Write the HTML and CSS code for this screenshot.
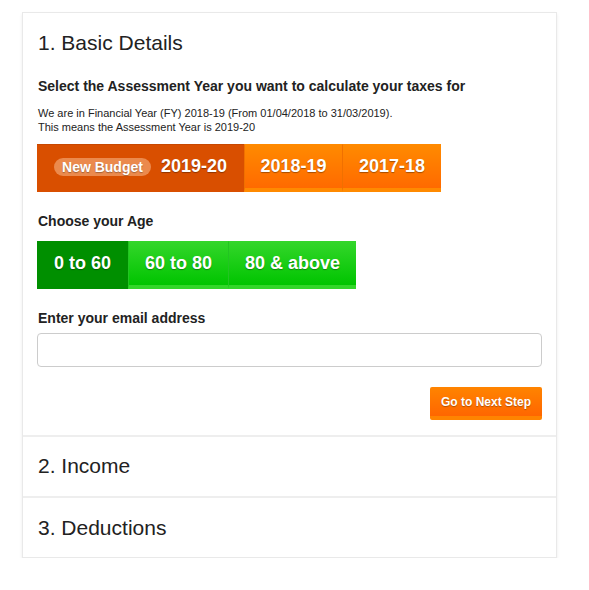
FILE: index.html
```html
<!DOCTYPE html>
<html>
<head>
<meta charset="utf-8">
<link rel="stylesheet" href="styles.css">
</head>
<body>
<div class="card">
  <section class="step step-open">
    <h2 class="step-title">1. Basic Details</h2>
    <h3 class="label year-label">Select the Assessment Year you want to calculate your taxes for</h3>
    <p class="note">We are in Financial Year (FY) 2018-19 (From 01/04/2018 to 31/03/2019).<br>This means the Assessment Year is 2019-20</p>
    <div class="btn-group">
      <button class="opt orange active y1"><span class="pill">New Budget</span>2019-20</button>
      <button class="opt orange y2">2018-19</button>
      <button class="opt orange y3">2017-18</button>
    </div>
    <h3 class="label age-label">Choose your Age</h3>
    <div class="btn-group age-group">
      <button class="opt green active g1">0 to 60</button>
      <button class="opt green g2">60 to 80</button>
      <button class="opt green g3">80 &amp; above</button>
    </div>
    <h3 class="label email-label">Enter your email address</h3>
    <input class="email" type="text">
    <div class="actions">
      <button class="next">Go to Next Step</button>
    </div>
  </section>
  <section class="step"><h2 class="step-title">2. Income</h2></section>
  <section class="step last"><h2 class="step-title">3. Deductions</h2></section>
</div>
</body>
</html>
```

FILE: styles.css
```css
* { box-sizing: border-box; }
body {
  margin: 0;
  background: #fff;
  font-family: "Liberation Sans", Arial, sans-serif;
  color: #222;
}
.card {
  margin: 12px 0 0 22px;
  width: 535px;
  border: 1px solid #e9e9e9;
  box-shadow: 0 2px 3px rgba(0,0,0,0.08);
  background: #fff;
}
.step {
  border-bottom: 2px solid #eeeeee;
  padding: 0 15px 1px;
  height: 61px;
  display: flex;
  align-items: center;
}
.step.last { border-bottom: none; height: 59px; padding-bottom: 0; }
.step-open {
  display: block;
  height: auto;
  padding: 19px 14px 15px 14px;
}
.step-open .step-title { padding-left: 1px; }
.step-title {
  margin: 0;
  font-size: 21px;
  font-weight: normal;
  line-height: 22px;
  color: #222;
}
.label {
  margin: 23px 0 0;
  padding-left: 1px;
  font-size: 14px;
  font-weight: bold;
  line-height: 16px;
  color: #222;
}
.year-label { margin-top: 24px; }
.note {
  margin: 12px 0 0;
  padding-left: 1px;
  font-size: 11px;
  line-height: 14px;
  color: #222;
}
.btn-group {
  display: flex;
  margin-top: 10px;
}
.age-group { margin-top: 12px; }
.opt {
  border: none;
  margin: 0;
  height: 48px;
  font-family: "Liberation Sans", Arial, sans-serif;
  font-weight: bold;
  font-size: 18px;
  color: #fff;
  text-shadow: 0 1px 1px rgba(0,0,0,0.35);
  display: flex;
  align-items: center;
  justify-content: center;
  padding: 0;
}
.orange {
  background: linear-gradient(#ff8a00, #ff6a00);
  border-bottom: 4px solid #ff8a00;
  border-top: 1px solid #ff8a00;
  border-left: 1px solid #f07000;
}
.orange.active {
  background: #d94f00;
  border: none;
  border-top: 1px solid #c84800;
  border-bottom: 4px solid #d94f00;
}
.y1 { width: 207px; }
.y2 { width: 98px; }
.y3 { width: 99px; }
.pill {
  display: inline-block;
  background: #eb8a4d;
  border-radius: 10px;
  font-size: 14px;
  line-height: 18px;
  padding: 0 8px;
  margin-right: 10px;
  text-shadow: 0 1px 1px rgba(0,0,0,0.3);
}
.age-label { margin-top: 21px; }
.green {
  background: linear-gradient(#33d62a, #00c400);
  border-top: 1px solid #33d62a;
  border-left: 1px solid #22c422;
  border-bottom: 4px solid #33d62a;
}
.green.active {
  background: #008f00;
  border: none;
  border-bottom: 4px solid #008f00;
}
.g1 { width: 91px; }
.g2 { width: 100px; }
.g3 { width: 128px; }
.email-label { margin-top: 21px; }
.email {
  display: block;
  margin-top: 7px;
  width: 100%;
  height: 34px;
  border: 1px solid #cccccc;
  border-radius: 4px;
  background: #fff;
}
.actions {
  display: flex;
  justify-content: flex-end;
  margin-top: 20px;
}
.next {
  width: 112px;
  height: 33px;
  border: none;
  border-radius: 2px;
  background: linear-gradient(#ff8400, #ff6600);
  border-bottom: 4px solid #ff8400;
  color: #fff;
  font-family: "Liberation Sans", Arial, sans-serif;
  font-weight: bold;
  font-size: 12px;
  text-shadow: 0 1px 1px rgba(0,0,0,0.3);
  padding: 0;
}
```
